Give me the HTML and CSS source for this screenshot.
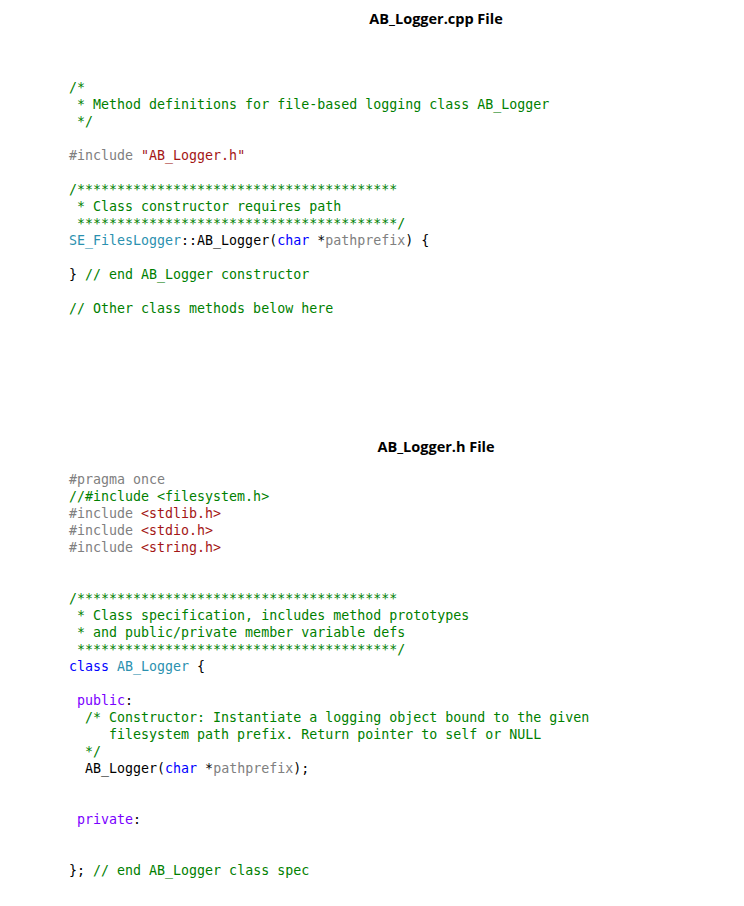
FILE: index.html
```html
<!DOCTYPE html>
<html>
<head>
<meta charset="utf-8">
<link rel="stylesheet" href="styles.css">
</head>
<body>
<h1 class="title">AB_Logger.cpp File</h1>
<pre class="code code-cpp"><span class="cm">/*
 * Method definitions for file-based logging class AB_Logger
 */</span>

<span class="pp">#include </span><span class="str">"AB_Logger.h"</span>

<span class="cm">/****************************************
 * Class constructor requires path
 ****************************************/</span>
<span class="ty">SE_FilesLogger</span>::AB_Logger(<span class="kw">char</span> *<span class="pm">pathprefix</span>) {

} <span class="cm">// end AB_Logger constructor</span>

<span class="cm">// Other class methods below here</span></pre>
<h1 class="title title-h">AB_Logger.h File</h1>
<pre class="code"><span class="pp">#pragma once</span>
<span class="cm">//#include &lt;filesystem.h&gt;</span>
<span class="pp">#include </span><span class="str">&lt;stdlib.h&gt;</span>
<span class="pp">#include </span><span class="str">&lt;stdio.h&gt;</span>
<span class="pp">#include </span><span class="str">&lt;string.h&gt;</span>


<span class="cm">/****************************************
 * Class specification, includes method prototypes
 * and public/private member variable defs
 ****************************************/</span>
<span class="kw">class</span> <span class="ty">AB_Logger</span> {

 <span class="ac">public</span>:
  <span class="cm">/* Constructor: Instantiate a logging object bound to the given
     filesystem path prefix. Return pointer to self or NULL
  */</span>
  AB_Logger(<span class="kw">char</span> *<span class="pm">pathprefix</span>);


 <span class="ac">private</span>:


}; <span class="cm">// end AB_Logger class spec</span></pre>
</body>
</html>
```
FILE: styles.css
```css
html, body {
  margin: 0;
  padding: 0;
  background: #ffffff;
}

body {
  width: 744px;
  height: 906px;
  overflow: hidden;
}

.title {
  margin: 0;
  padding: 9px 0 0 128px;
  height: 29px;
  line-height: 20px;
  text-align: center;
  font-family: "Open Sans", "Liberation Sans", sans-serif;
  font-weight: 700;
  font-size: 14.5px;
  color: #000000;
}

.title-h {
  margin-top: 120px;
  padding-top: 0;
  height: 34px;
}

.code {
  margin: 41px 0 0 0;
  padding: 0 0 0 69px;
  font-family: "DejaVu Sans Mono", monospace;
  font-size: 13.3px;
  line-height: 17px;
  color: #000000;
  white-space: pre;
}

.title-h + .code {
  margin-top: 0;
}

.cm { color: #008000; }
.pp { color: #808080; }
.str { color: #a31515; }
.ty { color: #2b91af; }
.kw { color: #0000ff; }
.pm { color: #808080; }
.ac { color: #7a00ff; }
```
